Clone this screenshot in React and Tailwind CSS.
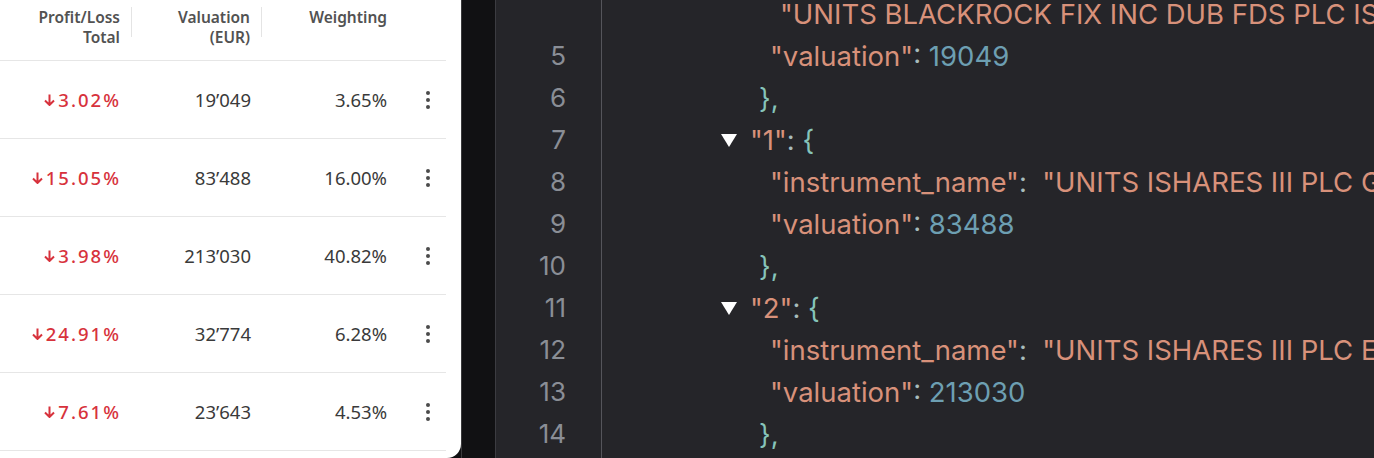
import React from "react";

const rows = [
  { pl: "3.02%", val: "19’049", weight: "3.65%" },
  { pl: "15.05%", val: "83’488", weight: "16.00%" },
  { pl: "3.98%", val: "213’030", weight: "40.82%" },
  { pl: "24.91%", val: "32’774", weight: "6.28%" },
  { pl: "7.61%", val: "23’643", weight: "4.53%" },
];

const Str = ({ children }) => <span className="text-[#d8917a]">{children}</span>;
const Num = ({ children }) => <span className="text-[#6d9fb2]">{children}</span>;
const Punc = ({ children }) => <span className="text-[#86c4ba]">{children}</span>;
const Colon = () => <span className="text-[#a8bcbc]">:</span>;

const Kebab = () => (
  <div className="flex w-[4px] flex-col items-center gap-[3px]">
    <span className="w-[4px] h-[4px] rounded-full bg-[#4b4b4b]" />
    <span className="w-[4px] h-[4px] rounded-full bg-[#4b4b4b]" />
    <span className="w-[4px] h-[4px] rounded-full bg-[#4b4b4b]" />
  </div>
);

const DownArrow = () => (
  <svg width="11" height="12" viewBox="0 0 11 12" className="mr-[3px] mt-[1px]">
    <path d="M5.5 0.5 V10.5 M1 6.5 L5.5 11 L10 6.5" fill="none" stroke="#d7323c" strokeWidth="2" />
  </svg>
);

const Triangle = () => (
  <span className="inline-flex w-[18px] mr-[12px] justify-center">
    <svg width="16" height="13" viewBox="0 0 16 13">
      <path d="M0 0 H16 L8 13 Z" fill="#ffffff" />
    </svg>
  </span>
);

const codeLines = [
  { n: "", pl: 178, body: <Str>"UNITS BLACKROCK FIX INC DUB FDS PLC ISHS EUR CORP BOND</Str> },
  { n: "5", pl: 168, body: <><Str>"valuation"</Str><Colon /> <Num>19049</Num></> },
  { n: "6", pl: 157, body: <Punc>{"},"}</Punc> },
  { n: "7", pl: 118, tri: true, body: <><Str>"1"</Str><Colon /> <Punc>{"{"}</Punc></> },
  { n: "8", pl: 168, body: <><Str>"instrument_name"</Str><Colon />{"  "}<Str>"UNITS ISHARES III PLC GLOBAL</Str></> },
  { n: "9", pl: 168, body: <><Str>"valuation"</Str><Colon /> <Num>83488</Num></> },
  { n: "10", pl: 157, body: <Punc>{"},"}</Punc> },
  { n: "11", pl: 118, tri: true, body: <><Str>"2"</Str><Colon /> <Punc>{"{"}</Punc></> },
  { n: "12", pl: 168, body: <><Str>"instrument_name"</Str><Colon />{"  "}<Str>"UNITS ISHARES III PLC EUR</Str></> },
  { n: "13", pl: 168, body: <><Str>"valuation"</Str><Colon /> <Num>213030</Num></> },
  { n: "14", pl: 157, body: <Punc>{"},"}</Punc> },
];

export default function App() {
  return (
    <div className="flex w-[1374px] h-[458px] overflow-hidden bg-[#111113]">
      {/* Holdings table */}
      <div className="w-[461px] h-[458px] shrink-0 bg-white rounded-br-[14px] pr-[15px] font-['Noto_Sans','Open_Sans',sans-serif]">
        <div className="grid grid-cols-[132px_130px_136px_48px] h-[61px] border-b border-[#e6e6e6] text-[15.5px] leading-5 font-semibold text-[#525252]">
          <div className="mt-[7px] h-[30px] border-r border-[#e4e4e4] pr-[11px] text-right">
            Profit/Loss
            <br />
            Total
          </div>
          <div className="mt-[7px] h-[30px] border-r border-[#e4e4e4] pr-[11px] text-right">
            Valuation
            <br />
            (EUR)
          </div>
          <div className="mt-[7px] pr-[11px] text-right">Weighting</div>
          <div />
        </div>
        {rows.map((r) => (
          <div
            key={r.val}
            className="grid grid-cols-[132px_130px_136px_48px] h-[78px] items-center border-b border-[#e6e6e6] text-[18.5px]"
          >
            <div className="flex items-center justify-end pr-[13px] text-[#d7323c] font-medium tracking-[0.11em]">
              <DownArrow />
              <span className="-mr-[2px]">{r.pl}</span>
            </div>
            <div className="pr-[11px] text-right text-[#3a3a3a]">{r.val}</div>
            <div className="pr-[11px] text-right text-[#3a3a3a]">{r.weight}</div>
            <div className="pl-[28px]">
              <Kebab />
            </div>
          </div>
        ))}
      </div>

      {/* Dark strip */}
      <div className="w-[34px] shrink-0 border-l border-[#3a3a3c] bg-[#111113]" />

      {/* JSON editor */}
      <div className="flex flex-1 border-l border-[#3c3c41] bg-[#252529] font-['Inter','Roboto',sans-serif] text-[27.5px]">
        <div className="w-[106px] shrink-0 border-r border-[#55555b] pr-[35px] text-right text-[#8a8e96] text-[26px]">
          <div className="-mt-[7px]">
            {codeLines.map((l, i) => (
              <div key={i} className="h-[42px] leading-[42px]">
                {l.n}
              </div>
            ))}
          </div>
        </div>
        <div className="flex-1 overflow-hidden whitespace-pre">
          <div className="-mt-[7px]">
            {codeLines.map((l, i) => (
              <div key={i} className="h-[42px] leading-[42px] flex items-center" style={{ paddingLeft: l.pl }}>
                {l.tri && <Triangle />}
                <span>{l.body}</span>
              </div>
            ))}
          </div>
        </div>
      </div>
    </div>
  );
}
